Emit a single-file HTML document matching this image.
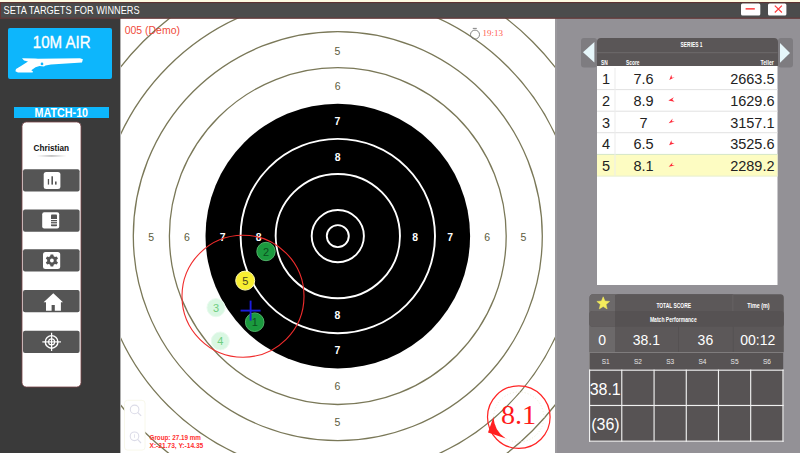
<!DOCTYPE html>
<html><head><meta charset="utf-8">
<style>
*{margin:0;padding:0;box-sizing:border-box}
html,body{width:800px;height:453px;overflow:hidden;background:#3a3a3a;font-family:"Liberation Sans",sans-serif}
.a{position:absolute}
#strip{left:0;top:0;width:800px;height:2px;background:#fdfbe2}
#title{left:0;top:2px;width:800px;height:16px;background:#4a4848;border:1px solid #6b2b2b;color:#fff;font-size:10px;line-height:14px;padding-left:3px;white-space:nowrap}
#side{left:0;top:18px;width:120px;height:435px;background:#3a3a3a}
#tgt{left:120px;top:18px;width:435px;height:435px;background:#fff;overflow:hidden}
#right{left:555px;top:18px;width:245px;height:435px;background:#939196}
</style></head><body>
<div id="strip" class="a"></div>

<svg class="a" style="left:0;top:0" width="120" height="453" viewBox="0 0 120 453">
<rect x="0" y="18" width="120" height="435" fill="#3a3a3a"/>
<rect x="8" y="28" width="104" height="51" rx="2" fill="#0db6fc"/>
<text x="32.8" y="47.8" font-family="Liberation Sans" font-size="16.5" fill="#fff" stroke="#fff" stroke-width="0.35" textLength="57.8" lengthAdjust="spacingAndGlyphs">10M AIR</text>
<path d="M22,58.2 L35,58.4 L38,58.8 L80,58.2 L82.9,59.2 L82,62.5 L51,64.6 L45.5,65.4 L44,66.4 L39.5,66 L35.5,67.2 L31.3,70.2 L33,71.4 L32.6,72.4 L18,72.4 L15.4,71.2 L16,69 L21,66 L28,61.4 L24,60.4 Z" fill="#fff"/>
<circle cx="42" cy="63.9" r="1.35" fill="#0db6fc"/>
<rect x="14" y="107" width="95" height="11" fill="#0db6fc"/>
<text x="34.6" y="117" font-family="Liberation Sans" font-weight="bold" font-size="12" fill="#fff" textLength="53.5" lengthAdjust="spacingAndGlyphs">MATCH-10</text>
<rect x="22" y="122" width="59" height="265" rx="4.5" fill="#fff" stroke="#7a4448" stroke-width="0.8"/>
<text x="33.6" y="150.5" font-family="Liberation Sans" font-weight="bold" font-size="8.5" fill="#111" textLength="35.4" lengthAdjust="spacingAndGlyphs">Christian</text>
<defs><linearGradient id="sh" x1="0" x2="1" y1="0" y2="0"><stop offset="0" stop-color="#fff"/><stop offset="0.5" stop-color="#a8a8a8"/><stop offset="1" stop-color="#fff"/></linearGradient></defs>
<rect x="36.5" y="155.3" width="30" height="1.3" fill="url(#sh)"/>
<g fill="#555">
<rect x="23" y="169.2" width="56.6" height="22.3" rx="2"/>
<rect x="23" y="209.5" width="56.6" height="22.3" rx="2"/>
<rect x="23" y="249.3" width="56.6" height="22.3" rx="2"/>
<rect x="23" y="290" width="56.6" height="22.3" rx="2"/>
<rect x="23" y="330.8" width="56.6" height="22.3" rx="2"/>
</g>
<!-- bar chart -->
<rect x="43.7" y="172" width="16.7" height="16.9" rx="2.5" fill="#fff"/>
<g fill="#555"><rect x="47.8" y="179" width="1.3" height="5.6"/><rect x="51.4" y="176.3" width="1.6" height="8.3"/><rect x="55" y="181.5" width="1.6" height="3.1"/></g>
<!-- doc -->
<rect x="42.2" y="212.2" width="17" height="16.4" rx="2" fill="#fff"/>
<rect x="51" y="214.6" width="6" height="11.7" rx="0.8" fill="#555"/>
<g fill="#fff"><rect x="51" y="219" width="6" height="1"/><rect x="51" y="221.3" width="6" height="0.8"/><rect x="51" y="223.4" width="6" height="1"/></g>
<!-- gear -->
<rect x="43" y="252" width="17.2" height="16.9" rx="2.5" fill="#fff"/>
<g transform="translate(51.9 260.5)">
<path fill="#555" fill-rule="evenodd" d="M-1.3,-6 L1.3,-6 L1.8,-4.2 L3.1,-3.5 L4.8,-4.1 L6.1,-1.9 L4.7,-0.7 L4.7,0.7 L6.1,1.9 L4.8,4.1 L3.1,3.5 L1.8,4.2 L1.3,6 L-1.3,6 L-1.8,4.2 L-3.1,3.5 L-4.8,4.1 L-6.1,1.9 L-4.7,0.7 L-4.7,-0.7 L-6.1,-1.9 L-4.8,-4.1 L-3.1,-3.5 L-1.8,-4.2 Z M1.9,0 A1.9,1.9 0 1 0 -1.9,0 A1.9,1.9 0 1 0 1.9,0 Z"/>
</g>
<!-- house -->
<path fill="#fff" d="M53.3,293.2 L63,302.2 L60.9,302.2 L60.9,310.8 L54.8,310.8 L54.8,304.9 L51.6,304.9 L51.6,310.8 L46,310.8 L46,302.2 L43.6,302.2 Z"/>
<!-- crosshair -->
<g stroke="#fff" fill="none">
<circle cx="51.6" cy="341.9" r="6.3" stroke-width="1.4"/>
<circle cx="51.6" cy="341.9" r="3" stroke-width="1.1"/>
<line x1="42.3" y1="341.9" x2="61" y2="341.9" stroke-width="1.2"/>
<line x1="51.6" y1="332.8" x2="51.6" y2="351" stroke-width="1.2"/>
</g>
</svg>
<div id="tgt" class="a">
<svg width="435" height="435" viewBox="0 0 435 435" style="position:absolute;left:0;top:0">
<g fill="none" stroke="#7a7858" stroke-width="1.3">
<circle cx="217.8" cy="218.1" r="168.4"/>
<circle cx="217.8" cy="218.1" r="204.5"/>
<circle cx="217.8" cy="218.1" r="239.9"/>
<circle cx="217.8" cy="218.1" r="275.2"/>
</g>
<circle cx="217.8" cy="218.1" r="132.3" fill="#000"/>
<g fill="none" stroke="#fff" stroke-width="1.9">
<circle cx="217.8" cy="218.1" r="97.2"/>
<circle cx="217.8" cy="218.1" r="62.15"/>
<circle cx="217.8" cy="218.1" r="26.1"/>
<circle cx="217.8" cy="218.1" r="11"/>
</g>
<g font-family="Liberation Sans" font-size="10.5" fill="#5c5b3c" text-anchor="middle">
<text x="217.50" y="36.70">5</text>
<text x="217.55" y="72.25">6</text>
<text x="217.50" y="372.10">6</text>
<text x="217.50" y="407.85">5</text>
<text x="31.10" y="222.90">5</text>
<text x="66.80" y="222.90">6</text>
<text x="367.10" y="222.90">6</text>
<text x="403.40" y="222.90">5</text>
</g>
<g font-family="Liberation Sans" font-weight="bold" font-size="10.4" fill="#fff" text-anchor="middle">
<text x="217.5" y="107.35">7</text>
<text x="217.6" y="142.85">8</text>
<text x="217.5" y="300.85">8</text>
<text x="217.5" y="335.70">7</text>
<text x="102.6" y="222.90">7</text>
<text x="138.7" y="222.90">8</text>
<text x="295.1" y="222.90">8</text>
<text x="330.2" y="222.90">7</text>
</g>
<!-- shots -->
<g font-family="Liberation Sans" font-size="11" text-anchor="middle">
<circle cx="96" cy="289.7" r="9" fill="#d9f7e2" stroke="#e8fbee" stroke-width="1"/><text x="96" y="293.7" fill="#6fce80">3</text>
<circle cx="100.3" cy="323" r="9" fill="#d9f7e2" stroke="#e8fbee" stroke-width="1"/><text x="100.3" y="327" fill="#6fce80">4</text>
<circle cx="146" cy="233.5" r="9.2" fill="#1b9a3e" stroke="#50b068" stroke-width="1"/><text x="146" y="237.5" fill="#0b4f1f">2</text>
<circle cx="134.7" cy="304.2" r="9.3" fill="#1b9a3e" stroke="#50b068" stroke-width="1"/><text x="134.7" y="308.2" fill="#0b4f1f">1</text>
<circle cx="125.2" cy="262.6" r="9.5" fill="#f8ee32" stroke="#fffab0" stroke-width="1"/><text x="125.2" y="266.6" fill="#4a4520">5</text>
</g>
<g stroke="#1c1cdc" stroke-width="1.9">
<line x1="120.6" y1="292.6" x2="140.6" y2="292.6"/><line x1="130.6" y1="282.6" x2="130.6" y2="302.6"/>
</g>
<circle cx="123" cy="278.2" r="61" fill="none" stroke="#f02c2c" stroke-width="1.1"/>
<!-- 8.1 indicator -->
<circle cx="398.8" cy="399" r="25" fill="none" stroke="#eeeed8" stroke-width="1" stroke-dasharray="1 2"/>
<circle cx="398.8" cy="399.1" r="31.3" fill="none" stroke="#ff2424" stroke-width="1.2"/>
<path d="M373.5 398.8 L368 414.4 L385.8 420.6 Q374 413 373.5 398.8 Z" fill="#ff2020"/>
<text x="380.9" y="405.9" font-family="Liberation Serif" font-size="28.2" fill="#ff1a1a">8.1</text>
<!-- labels -->
<text x="4.7" y="15.8" font-family="Liberation Sans" font-size="11" fill="#f04a3a" textLength="55.3" lengthAdjust="spacingAndGlyphs">005 (Demo)</text>
<g stroke="#777" fill="none" stroke-width="0.9"><circle cx="355" cy="16.6" r="4.5"/><line x1="352.8" y1="10.4" x2="356.8" y2="10.4"/></g>
<text x="362.5" y="17.75" font-family="Liberation Serif" font-size="9" fill="#ff6050">19:13</text>
<text x="29.5" y="421.5" font-family="Liberation Sans" font-weight="bold" font-size="7" fill="#ff3030" textLength="51.3" lengthAdjust="spacingAndGlyphs">Group: 27.19 mm</text>
<text x="29.5" y="430" font-family="Liberation Sans" font-weight="bold" font-size="7" fill="#ff3030" textLength="53.8" lengthAdjust="spacingAndGlyphs">X:-21.73, Y:-14.35</text>
<!-- zoom icons -->
<rect x="4.5" y="382.3" width="20.5" height="49.8" rx="3" fill="#fff" stroke="#f6f6e6" stroke-width="0.8"/>
<g stroke="#dcdce8" stroke-width="1.1" fill="none"><circle cx="14.6" cy="391.4" r="4.3"/><line x1="17.7" y1="394.5" x2="21.2" y2="397.8"/><circle cx="14.5" cy="418.3" r="4.3"/><line x1="17.6" y1="421.4" x2="21" y2="425"/><line x1="14.5" y1="416.3" x2="14.5" y2="419.8" stroke-width="0.8"/></g>
</svg>
<div class="a" style="left:0;top:0;width:1px;height:435px;background:#b0b0b0"></div>
</div>
<div id="right" class="a"></div><div class="a" style="left:555px;top:18px;width:2px;height:435px;background:#9b999d"></div>
<svg class="a" style="left:0;top:0" width="800" height="453" viewBox="0 0 800 453">
<rect x="597" y="66" width="180.5" height="219" fill="#fff"/>
<rect x="597" y="154.4" width="180.5" height="21.8" fill="#fdfcc2"/>
<rect x="597" y="89.1" width="180.5" height="1" fill="#e2e2e2"/>
<rect x="597" y="110.7" width="180.5" height="1" fill="#e2e2e2"/>
<rect x="597" y="132.2" width="180.5" height="1" fill="#e2e2e2"/>
<rect x="597" y="153.9" width="180.5" height="1" fill="#d4e6c8"/>
<rect x="597" y="175.6" width="180.5" height="1" fill="#e6eed2"/>
<rect x="614.5" y="68" width="1" height="107.6" fill="#ececec"/>
<polygon points="669.33,80.07 671.32,74.77 671.98,77.64 674.63,77.19" fill="#ff2a3a"/>
<polygon points="668.34,100.43 673.86,97.34 672.31,99.56 674.52,101.76" fill="#ff2a3a"/>
<polygon points="668.63,123.13 672.60,118.49 671.94,121.14 674.81,121.58" fill="#ff2a3a"/>
<polygon points="669.13,145.18 671.34,140.32 671.78,142.75 674.66,143.20" fill="#ff2a3a"/>
<polygon points="668.63,166.72 672.60,162.54 671.94,164.96 674.81,165.40" fill="#ff2a3a"/>
<path d="M597,66 L597,42 Q597,38 601,38 L774,38 Q778,38 778,42 L778,66 Z" fill="#5a5657"/>
<rect x="597" y="52.2" width="180.5" height="1" fill="#6e6a6b"/>
<text x="680.6" y="46.9" font-family="Liberation Sans" font-weight="bold" font-size="6.3" fill="#fff" textLength="22" lengthAdjust="spacingAndGlyphs">SERIES 1</text>
<text x="601" y="64.8" font-family="Liberation Sans" font-weight="bold" font-size="6.3" fill="#fff" textLength="6.7" lengthAdjust="spacingAndGlyphs">SN</text>
<text x="626" y="64.8" font-family="Liberation Sans" font-weight="bold" font-size="6.3" fill="#fff" textLength="13.5" lengthAdjust="spacingAndGlyphs">Score</text>
<text x="760.4" y="64.8" font-family="Liberation Sans" font-weight="bold" font-size="6.3" fill="#fff" textLength="13.4" lengthAdjust="spacingAndGlyphs">Teller</text>
<rect x="581" y="38" width="16" height="29.5" rx="3" fill="#7e7c80"/>
<path d="M583,52.2 L594.4,42 L594.4,62.5 Z" fill="#e6f6fa"/>
<rect x="778" y="38" width="15" height="29.5" rx="3" fill="#7e7c80"/>
<path d="M790,53 L780,43 L780,62.8 Z" fill="#e6f6fa"/>
<text x="606" y="84.4" text-anchor="middle" font-family="Liberation Sans" font-size="14.5" fill="#222">1</text>
<text x="643.5" y="84.4" text-anchor="middle" font-family="Liberation Sans" font-size="14.5" fill="#222">7.6</text>
<text x="774.5" y="84.4" text-anchor="end" font-family="Liberation Sans" font-size="14.5" fill="#222">2663.5</text>
<text x="606" y="106.0" text-anchor="middle" font-family="Liberation Sans" font-size="14.5" fill="#222">2</text>
<text x="643.5" y="106.0" text-anchor="middle" font-family="Liberation Sans" font-size="14.5" fill="#222">8.9</text>
<text x="774.5" y="106.0" text-anchor="end" font-family="Liberation Sans" font-size="14.5" fill="#222">1629.6</text>
<text x="606" y="127.5" text-anchor="middle" font-family="Liberation Sans" font-size="14.5" fill="#222">3</text>
<text x="643.5" y="127.5" text-anchor="middle" font-family="Liberation Sans" font-size="14.5" fill="#222">7</text>
<text x="774.5" y="127.5" text-anchor="end" font-family="Liberation Sans" font-size="14.5" fill="#222">3157.1</text>
<text x="606" y="149.2" text-anchor="middle" font-family="Liberation Sans" font-size="14.5" fill="#222">4</text>
<text x="643.5" y="149.2" text-anchor="middle" font-family="Liberation Sans" font-size="14.5" fill="#222">6.5</text>
<text x="774.5" y="149.2" text-anchor="end" font-family="Liberation Sans" font-size="14.5" fill="#222">3525.6</text>
<text x="606" y="170.6" text-anchor="middle" font-family="Liberation Sans" font-size="14.5" fill="#222">5</text>
<text x="643.5" y="170.6" text-anchor="middle" font-family="Liberation Sans" font-size="14.5" fill="#222">8.1</text>
<text x="774.5" y="170.6" text-anchor="end" font-family="Liberation Sans" font-size="14.5" fill="#222">2289.2</text>
</svg>
<svg class="a" style="left:0;top:0" width="800" height="453" viewBox="0 0 800 453">
<path d="M589.5,352 L589.5,298 Q589.5,294.3 593,294.3 L780.6,294.3 Q783.8,294.3 783.8,298 L783.8,352 Z" fill="#5c5859"/>
<path d="M589.5,352 L589.5,298 Q589.5,294.3 593,294.3 L615,294.3 L615,352 Z" fill="#6c696a"/>
<path d="M615,311 L615,297.5 Q615,294.3 618.5,294.3 L733,294.3 L733,311 Z" fill="#5c5859"/>
<rect x="732.4" y="294.3" width="0.9" height="16.7" fill="#676364"/>
<rect x="589.5" y="311" width="194.3" height="15.8" rx="3" fill="#565253"/>
<path d="M592.5,311 L615,311 L615,326.8 L592.5,326.8 Q589.5,326.8 589.5,323.8 L589.5,314 Q589.5,311 592.5,311 Z" fill="#615d5e"/>
<rect x="678.2" y="326.8" width="0.8" height="25" fill="#545051"/>
<rect x="732.8" y="326.8" width="0.8" height="25" fill="#545051"/>
<polygon points="603.20,296.80 604.96,301.07 609.57,301.43 606.05,304.43 607.14,308.92 603.20,306.50 599.26,308.92 600.35,304.43 596.83,301.43 601.44,301.07" fill="#f4ec5c" stroke="#f4ec5c" stroke-width="0.5" stroke-linejoin="round"/>
<text x="656.4" y="307.8" font-family="Liberation Sans" font-weight="bold" fill="#fff" font-size="6.5" textLength="34.6" lengthAdjust="spacingAndGlyphs">TOTAL SCORE</text>
<text x="747.2" y="307.8" font-family="Liberation Sans" font-weight="bold" fill="#fff" font-size="6.5" textLength="22.4" lengthAdjust="spacingAndGlyphs">Time (m)</text>
<text x="649.9" y="321.7" font-family="Liberation Sans" font-weight="bold" fill="#fff" font-size="6.5" textLength="46.8" lengthAdjust="spacingAndGlyphs">Match Performance</text>
<text x="602.1" y="345" font-family="Liberation Sans" fill="#fff" font-size="14" text-anchor="middle">0</text>
<text x="646.4" y="345" font-family="Liberation Sans" fill="#fff" font-size="14" text-anchor="middle">38.1</text>
<text x="705.4" y="345" font-family="Liberation Sans" fill="#fff" font-size="14" text-anchor="middle">36</text>
<text x="757.7" y="345" font-family="Liberation Sans" fill="#fff" font-size="14" text-anchor="middle">00:12</text>
<rect x="589.2" y="352" width="194" height="89.5" fill="#575354"/>
<rect x="589.2" y="352" width="194" height="0.8" fill="#8a8788"/>
<rect x="589.2" y="352" width="0.8" height="18" fill="#8a8788"/>
<text x="605.7" y="364" font-family="Liberation Sans" fill="#e8e8e8" font-size="6.5" text-anchor="middle">S1</text>
<text x="637.9" y="364" font-family="Liberation Sans" fill="#e8e8e8" font-size="6.5" text-anchor="middle">S2</text>
<text x="670.2" y="364" font-family="Liberation Sans" fill="#e8e8e8" font-size="6.5" text-anchor="middle">S3</text>
<text x="702.4" y="364" font-family="Liberation Sans" fill="#e8e8e8" font-size="6.5" text-anchor="middle">S4</text>
<text x="734.6" y="364" font-family="Liberation Sans" fill="#e8e8e8" font-size="6.5" text-anchor="middle">S5</text>
<text x="766.9" y="364" font-family="Liberation Sans" fill="#e8e8e8" font-size="6.5" text-anchor="middle">S6</text>
<rect x="589" y="369.6" width="194.7" height="1.15" fill="#f0f0f0"/>
<rect x="589" y="404.9" width="194.7" height="1.15" fill="#f0f0f0"/>
<rect x="589" y="440.6" width="194.7" height="1.15" fill="#f0f0f0"/>
<rect x="589.0" y="369.6" width="1.15" height="72.2" fill="#f0f0f0"/>
<rect x="621.2" y="369.6" width="1.15" height="72.2" fill="#f0f0f0"/>
<rect x="653.5" y="369.6" width="1.15" height="72.2" fill="#f0f0f0"/>
<rect x="685.7" y="369.6" width="1.15" height="72.2" fill="#f0f0f0"/>
<rect x="717.9" y="369.6" width="1.15" height="72.2" fill="#f0f0f0"/>
<rect x="750.1" y="369.6" width="1.15" height="72.2" fill="#f0f0f0"/>
<rect x="782.4" y="369.6" width="1.15" height="72.2" fill="#f0f0f0"/>
<text x="605.2" y="394.8" font-family="Liberation Sans" fill="#fff" font-size="16" text-anchor="middle">38.1</text>
<text x="605.4" y="430" font-family="Liberation Sans" fill="#fff" font-size="16" text-anchor="middle">(36)</text>
</svg>
<svg class="a" style="left:0;top:0" width="800" height="20" viewBox="0 0 800 20">
<rect x="0" y="0" width="800" height="2.4" fill="#fdfbe2"/>
<rect x="0" y="2.4" width="800" height="16.2" fill="#4b4c4c"/>
<rect x="0" y="2.2" width="800" height="0.9" fill="#5e2a2a"/>
<rect x="0" y="17.7" width="800" height="0.9" fill="#6e3232"/>
<rect x="0" y="2.4" width="0.9" height="16.2" fill="#6e3232"/>
<text x="3.6" y="14" font-family="Liberation Sans" font-size="10.6" fill="#fff" textLength="136" lengthAdjust="spacingAndGlyphs">SETA TARGETS FOR WINNERS</text>
<rect x="741" y="3.5" width="19.3" height="12" rx="1.5" fill="#fff"/>
<rect x="745.6" y="8.1" width="9.2" height="1.5" fill="#ff3b3b"/>
<rect x="768" y="3.5" width="18.4" height="12" rx="1.5" fill="#fff"/>
<path d="M774.8,5.6 L781.9,12.5 M781.9,5.6 L774.8,12.5" stroke="#ff3b3b" stroke-width="1.2"/>
</svg>
</body></html>
